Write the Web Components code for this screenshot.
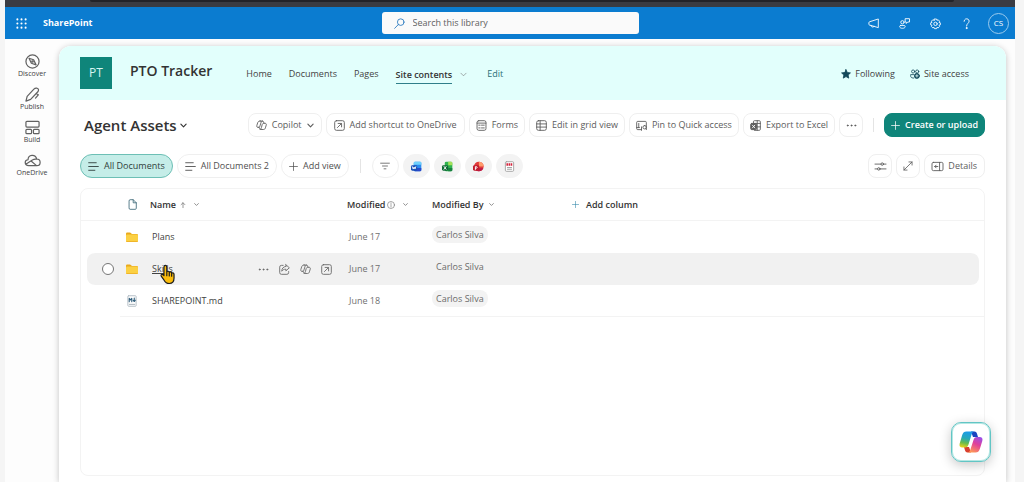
<!DOCTYPE html>
<html lang="en">
<head>
<meta charset="utf-8">
<meta name="viewport" content="width=device-width, initial-scale=1">
<title>PTO Tracker - Agent Assets</title>
<style>
  html, body { height: 100%; }
  body {
    margin: 0;
    background: #f5f5f5;
    color: #424242;
    font: 9px/12px "Open Sans", "Noto Sans", "Liberation Sans", sans-serif;
    --teal: #0f857a;
    --line: #efefef;
  }
</style>
</head>
<body>
<sp-app></sp-app>

<script>
  // Icon shapes, all on a 16x16 grid and stroked unless they say otherwise
  const ICONS = {
    waffle: [2, 8, 14].map(y => [2, 8, 14].map(x => `<circle cx="${x}" cy="${y}" r="1.5" fill="currentColor" stroke="none"/>`).join('')).join(''),
    search: '<circle cx="9.8" cy="6" r="4.8"/><path d="M6.4 9.4 1 15"/>',
    megaphone: '<path d="M15 2v12L2 10.200a1 1 0 0 1-.7-1V6.600a1 1 0 0 1 .7-1ZM4.300 10.800c0 2.600 3.600 3.400 4.500 1.200"/>',
    people: '<circle cx="5" cy="6.2" r="2.4"/><path d="M2.5 10.8h5c1 0 1.500.7 1.500 1.700 0 3.300-8 3.300-8 0 0-1 .5-1.700 1.500-1.700ZM9.500 1h5.800v4.800h-2.600L10.600 8V5.800H9.500Z"/>',
    gear: '<path d="M6.5 1.500h3l.6 1.900 1.800-.8 2 2-.8 1.800 1.900.6v3l-1.900.6.8 1.800-2 2-1.800-.8-.6 1.900h-3l-.6-1.900-1.800.8-2-2 .8-1.800L1 10V7l1.900-.6-.8-1.800 2-2 1.800.8Z"/><circle cx="8" cy="8.500" r="2.500"/>',
    help: '<path d="M4.500 4.800C4.500-.2 11.800 0 11.800 4.600c0 3-3.700 3.400-3.700 7"/><circle cx="8.100" cy="14.600" r=".8" fill="currentColor"/>',
    discover: '<circle cx="8" cy="8" r="7"/><path d="m4.300 4.500 4.900 1.600 2.600 5.500-5-1.700Z"/><circle cx="8" cy="8" r=".8"/>',
    publish: '<path d="M1 15 2.300 10 9.500 2.300c1.600-1.700 4.600-1.300 4.900.6.100.8-.1 1.500-.7 2.200L6 13.200ZM12 7l2.200 1.300-3 3.600"/>',
    build: '<rect x="1" y="1.500" width="14" height="6" rx="1"/><rect x="1" y="10" width="6" height="4.500" rx="1"/><rect x="9" y="10" width="6" height="4.500" rx="1"/>',
    onedrive: '<path d="M4 13.500C-.9 13.300-.9 7.600 3.200 7.200 3.400 1.500 11 .9 12.500 6.400c4.900.2 4.800 7.100 0 7.100ZM.8 12 8.300 7.300c1.200-.8 2.500-.9 4-.7M6.500 8.500l5.800 5"/>',
    star: '<path fill="currentColor" d="m8 1 2.100 4.600 5 .6-3.700 3.400 1 5L8 12.100l-4.400 2.500 1-5L.9 6.200l5-.6Z"/>',
    access: '<circle cx="5" cy="4" r="2.500"/><circle cx="11.500" cy="4" r="2.500"/><path d="M6 14.500C.5 14.500 1 12 1 9h5"/><circle cx="11" cy="11" r="4" fill="currentColor"/><path stroke="#e2fffc" d="M11 9v4M9 11h4"/>',
    down: '<path d="m2 5 6 6 6-6"/>',
    smallDown: '<path stroke-width="2.600" d="m2 5 6 6 6-6"/>',
    up: '<path stroke-width="2" d="M8 15V2M3 7l5-5 5 5"/>',
    plus: '<path d="M8 1v14M1 8h14"/>',
    lines: '<path d="M1 2.500h11M1 8h14M1 13.500h9"/>',
    copilot: '<path d="M6 1.500h3.500c1 0 1.300.7 1.600 1.800l.4 1.500h1.500c1.700 0 2.300 1 1.900 2.600l-1.200 4c-.5 1.600-1.200 2.400-2.700 2.400H7c-1.100 0-1.500-.7-1.800-1.800l-.4-1.300H3.200c-1.700 0-2.500-1-2-2.600l1.300-4.200C3 2.300 4 1.500 6 1.500ZM9.500 1.500C8 1.500 7.500 3 7 4.500l-1.200 4c-.4 1.500-1 2.200-2.600 2.200M11.500 4.800c-1.700 0-2.200.8-2.600 2.200l-1 4c-.4 1.500-.9 2.800-2 2.800"/>',
    shortcut: '<rect x="1" y="1" width="14" height="14" rx="2.500"/><path d="M5 11l5.500-5.500M6 5h5v5"/>',
    forms: '<rect x="1.500" y="1" width="13" height="14" rx="2.500"/><path d="M1.500 4.500h13M4 7.500h2M8 7.500h4M4 11.500h2M8 11.500h4"/>',
    grid: '<rect x="1" y="1" width="14" height="14" rx="2.500"/><path d="M1 5.700h14M1 10.300h14M6 1v14"/>',
    pin: '<path d="M8 14H2.500A1.500 1.500 0 0 1 1 12.500v-9A1.500 1.500 0 0 1 2.500 2h11A1.500 1.500 0 0 1 15 3.500V14M4 5v6M1 11h4M12.500 8a2.500 2.500 0 1 0 .1 5 2.500 2.500 0 0 0-.1-5M8 10v5"/>',
    excel: '<path d="M5 4V2.500A1.500 1.500 0 0 1 6.500 1h7A1.500 1.500 0 0 1 15 2.500v11a1.500 1.500 0 0 1-1.500 1.500h-7M10.500 1v14M5 5h10M10 10h5"/><rect x="1" y="5" width="8.500" height="9" rx="1.500" fill="currentColor"/><path stroke="#fff" d="m3.500 7.500 3.500 4M7 7.500l-3.500 4"/>',
    more: [2.5, 8, 13.5].map(x => `<circle cx="${x}" cy="8" r="1" fill="currentColor" stroke-width=".6"/>`).join(''),
    filter: '<path d="M1 3.500h14M4 8h8M6.500 12.500h3"/>',
    sliders: '<path d="M0 4.500h8.500M12.500 4.500H16M0 11.500h3.500M7.500 11.500H16"/><circle cx="10.500" cy="4.500" r="1.800"/><circle cx="5.500" cy="11.500" r="1.800"/>',
    expand: '<path d="M1.500 14.500l13-13M9.500 1.500h5v5M1.500 9.500v5h5"/>',
    details: '<rect x="0" y="2" width="16" height="12" rx="2"/><path d="M11 2v12M8.500 8H4M6 6 4 8l2 2"/>',
    file: '<path fill="#fff" d="M3 2.500A1.500 1.500 0 0 1 4.500 1H9l4.500 4.500v8A1.500 1.500 0 0 1 12 15H4.500A1.500 1.500 0 0 1 3 13.500ZM9 1v4.500h4.500"/>',
    info: '<circle cx="8" cy="8" r="7"/><path d="M8 7v5M8 4v1"/>',
    share: '<path d="M6 2H3.500A2.500 2.500 0 0 0 1 4.500v8A2.500 2.500 0 0 0 3.500 15h8a2.500 2.500 0 0 0 2.500-2.500V11M10 1l5 4.500-5 4.500V7.500c-3 0-4.500 1-6 3 .2-4 2-6.500 6-7Z"/>',
    folder: '<path fill="#e9a91c" stroke="none" d="M0 3.500A1.500 1.500 0 0 1 1.500 2h4L8 4h6.500A1.500 1.500 0 0 1 16 5.500V8H0Z"/><rect y="4.800" width="16" height="9.700" rx="1.300" fill="#fbd043" stroke="none"/><path stroke="#f0b429" d="M1 14h14"/>',
    markdown: '<rect x="2.500" y="1" width="11" height="14" rx="1" fill="#fff" stroke="#b4bec5"/><path stroke="#34617e" stroke-width="1.500" d="M4.300 9V4.500l1.700 2 1.700-2V9M11 4v4.500M9.600 7 11 8.700 12.400 7"/><path stroke="#aab4bb" d="M4.500 12.500h7"/>',
    word: '<g stroke="none"><rect x="4" y="1" width="11" height="14" rx="2" fill="#2b8df0"/><path d="M4 3a2 2 0 0 1 2-2h7a2 2 0 0 1 2 2v2.500H4Z" fill="#6fd0fb"/><path d="M4 10h11v3a2 2 0 0 1-2 2H6a2 2 0 0 1-2-2Z" fill="#2a49c8"/><rect x="0" y="6" width="9" height="8" rx="2" fill="#1750b8"/></g><path stroke="#fff" d="m2 8.300 1.200 3.400 1.300-3 1.300 3L7 8.300"/>',
    xl: '<g stroke="none"><rect x="4" y="1" width="11" height="14" rx="2" fill="#2eb34f"/><path d="M6 1h7a2 2 0 0 1 2 2v3H9V1Z" fill="#a4e05a"/><path d="M9 10h6v3a2 2 0 0 1-2 2H9Z" fill="#17803f"/><rect x="0" y="6" width="9" height="8" rx="2" fill="#0f6b36"/></g><path stroke="#fff" d="m3 8 3 4M6 8l-3 4"/>',
    powerpoint: '<g stroke="none"><circle cx="8.500" cy="8" r="7" fill="#e03a3a"/><path d="M8.500 1a7 7 0 0 1 7 7h-7Z" fill="#ff9a6b"/><path d="M2 10.500a7 7 0 0 0 13 0Z" fill="#b9184a"/><rect x="0" y="6" width="9" height="8" rx="2" fill="#c01d2e"/></g><path stroke="#fff" d="M3.500 12.300V8.200h1.300c1.800 0 1.800 2.300 0 2.300H3.500"/>',
    pdf: '<rect x="2" y="1" width="12" height="14" rx="1.500" fill="#fff" stroke="#a0a0a0"/><path stroke="#d4263e" stroke-width="3.500" stroke-dasharray="2.300 .8" stroke-linecap="butt" d="M3.500 5h9"/><path stroke="#999" d="M5 9.500h6M5 12h6"/>',
    hand: '<path fill="#fbbc0b" stroke="#1c1c1c" stroke-width="1" d="M5 9V1.800C5-.1 7.400-.1 7.400 1.800v4c.7-.9 1.900-.6 2.100.4.700-.8 1.900-.4 2 .6 1-.6 2 0 2 1.200v3c0 3-1.300 4.600-4 4.600-2.400 0-3.400-1-4.500-3L2.700 9.300c-.6-1.300.9-2.100 2.300-.3ZM7.400 6v3M9.500 6.600v2.600M11.500 7.200v2.200"/>',
  };

  function define(tag, html, setup) {
    const template = document.createElement('template');
    template.innerHTML = html;
    customElements.define(tag, class extends HTMLElement {
      connectedCallback() {
        if (this.shadowRoot) return;
        this.attachShadow({ mode: 'open' }).appendChild(template.content.cloneNode(true));
        if (setup) setup(this, this.shadowRoot);
      }
    });
  }

  define('sp-icon', `
    <style>
      :host { display: inline-flex; flex: none; width: var(--size, 11px); height: var(--size, 11px); }
      svg { width: 100%; height: 100%; overflow: visible; fill: none; stroke: currentColor;
            stroke-width: 1.3; stroke-linecap: round; stroke-linejoin: round; }
    </style>
    <svg viewBox="0 0 16 16" aria-hidden="true"></svg>`,
    (host, root) => {
      root.querySelector('svg').innerHTML = ICONS[host.getAttribute('name')];
      if (host.hasAttribute('size')) host.style.setProperty('--size', host.getAttribute('size') + 'px');
    });

  // kind: primary | wide | pill | current | file | round, none for a plain command
  define('sp-button', `
    <style>
      :host { display: inline-flex; flex: none; }
      button {
        display: flex; align-items: center; justify-content: center; gap: 5px;
        box-sizing: border-box; height: 24px; padding: 0 6px;
        border: 1px solid var(--line); border-radius: 8px;
        background: #fff; color: #5c5c5c; font: inherit; font-weight: 500; white-space: nowrap;
      }
      :host([icon-only]) button { min-width: 24px; padding: 0 5px; }
      :host([kind="wide"]) button { padding: 0 7px; }
      :host([kind="primary"]) button { background: var(--teal); border-color: var(--teal); color: #fff; font-weight: 600; }
      :host([kind="pill"]) button, :host([kind="current"]) button { border-radius: 12px; padding: 0 7px; color: #505050; }
      :host([kind="current"]) button { background: #c5ede8; border-color: #6dbfb5; color: #2f3d3b; }
      :host([kind="file"]) button { background: #f3f3f3; border-color: #f3f3f3; }
      :host([kind="file"]) button, :host([kind="round"]) button { border-radius: 12px; min-width: 27px; }
    </style>
    <button type="button"><slot name="start"></slot><slot></slot><slot name="end"></slot></button>`,
    (host, root) => {
      if (host.hasAttribute('label')) root.querySelector('button').setAttribute('aria-label', host.getAttribute('label'));
    });

  define('sp-suite-bar', `
    <style>
      :host { display: grid; grid-template-columns: 1fr 257px 1fr; align-items: center;
              height: 32px; background: #0b7cd0; color: #fff; }
      .brand, .tools { display: flex; align-items: center; }
      .brand { gap: 16px; padding-left: 11px; }
      .brand a { color: inherit; text-decoration: none; font-weight: 700; }
      button { display: flex; padding: 0; border: 0; background: none; color: inherit; font: inherit; }
      label { display: flex; align-items: center; gap: 8px; height: 22px; padding: 0 12px;
              border-radius: 3px; background: #fafafa; color: #2d7cc0; }
      input { flex: 1; min-width: 0; padding: 0; border: 0; outline: 0; background: none; font: inherit; color: #424242; }
      input::placeholder { color: #616161; opacity: 1; }
      .tools { justify-content: flex-end; gap: 20px; padding-right: 6px; }
      .tools .me { box-sizing: border-box; width: 21px; height: 21px; margin-left: -4px; align-items: center;
                   justify-content: center; border: 1px solid #9bcbee; border-radius: 50%; font-size: 8px; }
    </style>
    <div class="brand">
      <button type="button" aria-label="App launcher"><sp-icon name="waffle"></sp-icon></button>
      <a href="#">SharePoint</a>
    </div>
    <label><sp-icon name="search"></sp-icon><input type="text" placeholder="Search this library" aria-label="Search this library"></label>
    <div class="tools">
      <button type="button" aria-label="Announcements"><sp-icon name="megaphone"></sp-icon></button>
      <button type="button" aria-label="Teams"><sp-icon name="people"></sp-icon></button>
      <button type="button" aria-label="Settings"><sp-icon name="gear"></sp-icon></button>
      <button type="button" aria-label="Help"><sp-icon name="help"></sp-icon></button>
      <button type="button" class="me">CS</button>
    </div>`);

  define('sp-rail-item', `
    <style>
      :host { display: block; }
      a { display: flex; flex-direction: column; align-items: center;
          color: #424242; text-decoration: none; font-size: 7px; line-height: 9px; font-weight: 500; }
    </style>
    <a href="#"><slot name="icon"></slot><slot></slot></a>`);

  define('sp-rail', `
    <style>
      :host { display: block; flex: none; width: 54px; }
      nav { display: flex; flex-direction: column; gap: 9px; padding-top: 8px; }
      sp-icon { color: #616161; }
    </style>
    <nav aria-label="App bar">
      <sp-rail-item><sp-icon slot="icon" name="discover" size="15"></sp-icon>Discover</sp-rail-item>
      <sp-rail-item><sp-icon slot="icon" name="publish" size="15"></sp-icon>Publish</sp-rail-item>
      <sp-rail-item><sp-icon slot="icon" name="build" size="15"></sp-icon>Build</sp-rail-item>
      <sp-rail-item><sp-icon slot="icon" name="onedrive" size="15"></sp-icon>OneDrive</sp-rail-item>
    </nav>`);

  define('sp-site-header', `
    <style>
      :host { display: flex; align-items: center; height: 54px; padding: 0 37px 0 21px; background: #e2fffc; }
      .logo { display: grid; place-items: center; width: 32px; height: 32px; margin-right: 18px;
              background: var(--teal); color: #d6f5f1; font-size: 12px; }
      h1 { margin: 0 34px 4px 0; color: #333; font-size: 14px; line-height: 18px; font-weight: 600; }
      nav, .actions { display: flex; align-items: center; gap: 17px; padding-top: 2px; }
      a { color: inherit; text-decoration: none; }
      a[aria-current] { font-weight: 600; line-height: 16px; padding-top: 2px; border-bottom: 1px solid #2f7f8a; color: #333; }
      .menu { display: flex; margin: 0 3px 0 -9px; padding: 0; border: 0; background: none; color: #6a6a6a; }
      .edit { color: #2b6f77; }
      .actions { margin-left: auto; gap: 15px; }
      .actions button { display: flex; align-items: center; gap: 4px; padding: 0; border: 0; background: none; font: inherit; color: inherit; }
      .actions sp-icon { color: #12495a; }
    </style>
    <div class="logo">PT</div>
    <h1>PTO Tracker</h1>
    <nav aria-label="Site">
      <a href="#">Home</a><a href="#">Documents</a><a href="#">Pages</a>
      <a href="#" aria-current="page">Site contents</a>
      <button type="button" class="menu" aria-label="More site contents"><sp-icon name="down" size="7"></sp-icon></button>
      <a href="#" class="edit">Edit</a>
    </nav>
    <div class="actions">
      <button type="button"><sp-icon name="star" size="10"></sp-icon>Following</button>
      <button type="button"><sp-icon name="access" size="10"></sp-icon>Site access</button>
    </div>`);

  define('sp-command-bar', `
    <style>
      :host { display: flex; align-items: center; gap: 4px; padding-left: 4px; }
      h2 { display: flex; align-items: center; gap: 3px; margin: 0 auto 0 0; color: #333;
           font-size: 15px; line-height: 20px; font-weight: 600; white-space: nowrap; }
      hr { width: 1px; height: 14px; margin: 0 6px; border: 0; background: #e4e4e4; }
    </style>
    <h2>Agent Assets <sp-icon name="smallDown" size="7"></sp-icon></h2>
    <sp-button kind="wide"><sp-icon slot="start" name="copilot"></sp-icon>Copilot<sp-icon slot="end" name="smallDown" size="7"></sp-icon></sp-button>
    <sp-button kind="wide"><sp-icon slot="start" name="shortcut"></sp-icon>Add shortcut to OneDrive</sp-button>
    <sp-button><sp-icon slot="start" name="forms"></sp-icon>Forms</sp-button>
    <sp-button><sp-icon slot="start" name="grid"></sp-icon>Edit in grid view</sp-button>
    <sp-button><sp-icon slot="start" name="pin"></sp-icon>Pin to Quick access</sp-button>
    <sp-button><sp-icon slot="start" name="excel"></sp-icon>Export to Excel</sp-button>
    <sp-button icon-only label="More"><sp-icon name="more"></sp-icon></sp-button>
    <hr>
    <sp-button kind="primary"><sp-icon slot="start" name="plus" size="9"></sp-icon>Create or upload</sp-button>`);

  define('sp-view-bar', `
    <style>
      :host { display: flex; align-items: center; gap: 4px; }
      hr { width: 1px; height: 14px; margin: 0 7px; border: 0; background: #e4e4e4; }
      .gap { flex: 1; }
    </style>
    <sp-button kind="current"><sp-icon slot="start" name="lines"></sp-icon>All Documents</sp-button>
    <sp-button kind="pill"><sp-icon slot="start" name="lines"></sp-icon>All Documents 2</sp-button>
    <sp-button kind="pill"><sp-icon slot="start" name="plus" size="9"></sp-icon>Add view</sp-button>
    <hr>
    <sp-button kind="round" icon-only label="Filter"><sp-icon name="filter" size="10"></sp-icon></sp-button>
    <sp-button kind="file" icon-only label="Word"><sp-icon name="word"></sp-icon></sp-button>
    <sp-button kind="file" icon-only label="Excel"><sp-icon name="xl"></sp-icon></sp-button>
    <sp-button kind="file" icon-only label="PowerPoint"><sp-icon name="powerpoint"></sp-icon></sp-button>
    <sp-button kind="file" icon-only label="PDF"><sp-icon name="pdf"></sp-icon></sp-button>
    <span class="gap"></span>
    <sp-button icon-only label="View options"><sp-icon name="sliders"></sp-icon></sp-button>
    <sp-button icon-only label="Expand"><sp-icon name="expand" size="10"></sp-icon></sp-button>
    <sp-button kind="wide"><sp-icon slot="start" name="details"></sp-icon>Details</sp-button>`);

  const FILES = [
    { name: 'Plans', icon: 'folder', modified: 'June 17', by: 'Carlos Silva' },
    { name: 'Skills', icon: 'folder', modified: 'June 17', by: 'Carlos Silva', hover: true },
    { name: 'SHAREPOINT.md', icon: 'markdown', modified: 'June 18', by: 'Carlos Silva' },
  ];

  const fileRow = f => `
    <tr class="${f.hover ? 'hover' : ''}">
      <td class="pick">${f.hover ? `<input type="checkbox" aria-label="Select ${f.name}">` : ''}</td>
      <td class="type"><sp-icon name="${f.icon}" size="12"></sp-icon></td>
      <td class="name"><div class="cell">
        <a href="#">${f.name}</a>
        ${f.hover ? `
          <sp-icon class="cursor" name="hand" size="19"></sp-icon>
          <span class="tools">
            <button type="button" aria-label="More"><sp-icon name="more"></sp-icon></button>
            <button type="button" aria-label="Share"><sp-icon name="share"></sp-icon></button>
            <button type="button" aria-label="Copilot"><sp-icon name="copilot"></sp-icon></button>
            <button type="button" aria-label="Open"><sp-icon name="shortcut"></sp-icon></button>
          </span>` : ''}
      </div></td>
      <td class="date">${f.modified}</td>
      <td class="by"><span>${f.by}</span></td>
      <td></td>
    </tr>`;

  define('sp-file-list', `
    <style>
      :host { display: block; border: 1px solid #f3f3f3; border-radius: 8px; }
      table { width: 100%; table-layout: fixed; border-collapse: separate; border-spacing: 0; }
      th, td { box-sizing: border-box; height: 32px; padding: 0; text-align: left; vertical-align: middle; font-weight: 400; }
      th { border-bottom: 1px solid #f3f3f3; }
      th button { display: flex; align-items: center; gap: 5px; padding: 0; border: 0; background: none;
                  color: #333; font: inherit; font-weight: 600; }
      th.name { padding-left: 6px; }
      th.name button { gap: 4px; }
      th.name sp-icon:last-child { margin-left: 4px; }
      th.date, th.by { padding-left: 2px; }
      th.date span { display: flex; align-items: center; gap: 2px; }
      th.date button { gap: 8px; }
      th sp-icon { color: #777; }
      th.add sp-icon { color: #2f87a8; margin-right: 2px; }
      th.add { padding-left: 2px; }
      .type { text-align: center; line-height: 0; }
      .type sp-icon { vertical-align: middle; }
      th.type sp-icon { color: #47707f; }
      td.name { padding-left: 8px; }
      td.date { padding-left: 4px; color: #707070; }
      td.by { padding: 0 0 4px 2px; }
      td.by span { padding: 2px 4px; border-radius: 8px; background: #f3f3f3; color: #6b6b6b; }
      .cell { display: flex; align-items: center; justify-content: space-between; position: relative; }
      .cell a { color: inherit; text-decoration: none; }
      .hover td { background: #f1f1f1; }
      .hover td.by span { background: none; }
      .cell a:hover, .hover a { text-decoration: underline; }
      .hover td:first-child { border-left: 6px solid transparent; background-clip: padding-box; border-radius: 14px 0 0 14px / 8px 0 0 8px; }
      .hover td:last-child { border-right: 5px solid transparent; background-clip: padding-box; border-radius: 0 13px 13px 0 / 0 8px 8px 0; }
      tbody tr:last-child td:not(.pick) { border-bottom: 1px solid #f3f3f3; }
      .pick { text-align: right; line-height: 0; }
      input { appearance: none; box-sizing: border-box; width: 12px; height: 12px; margin: 0 6px 0 0;
              border: 1px solid #767676; border-radius: 50%; background: #fff; }
      .tools { display: flex; gap: 10px; padding-right: 13px; }
      .tools button { display: flex; padding: 0; border: 0; background: none; color: #6a6a6a; }
      .cursor { position: absolute; left: 6px; top: 2px; }
    </style>
    <table>
      <colgroup><col style="width:39px"><col style="width:24px"><col style="width:201px"><col style="width:85px"><col style="width:140px"><col></colgroup>
      <thead><tr>
        <th></th>
        <th class="type"><sp-icon name="file"></sp-icon></th>
        <th class="name"><button type="button">Name <sp-icon name="up" size="6"></sp-icon> <sp-icon name="smallDown" size="5"></sp-icon></button></th>
        <th class="date"><button type="button"><span>Modified <sp-icon name="info" size="8"></sp-icon></span><sp-icon name="smallDown" size="5"></sp-icon></button></th>
        <th class="by"><button type="button">Modified By <sp-icon name="smallDown" size="5"></sp-icon></button></th>
        <th class="add"><button type="button"><sp-icon name="plus" size="7"></sp-icon>Add column</button></th>
      </tr></thead>
      <tbody>${FILES.map(fileRow).join('')}</tbody>
    </table>`);

  define('sp-copilot-button', `
    <style>
      :host { display: block; }
      button { display: grid; place-items: center; width: 40px; height: 40px; padding: 0; box-sizing: border-box;
               border: 1px solid #62c5c5; border-radius: 10px; background: #fff;
               box-shadow: 0 0 0 1px #b5e8e3 inset, 0 3px 12px rgba(0, 0, 0, .22); }
      svg { width: 24px; height: 22px; }
    </style>
    <button type="button" aria-label="Copilot">
      <svg viewBox="0 0 24 22" aria-hidden="true">
        <defs>
          <linearGradient id="a" x1=".4" y1="0" x2=".2" y2="1"><stop offset="0" stop-color="#1b9be8"/><stop offset=".4" stop-color="#25a9b8"/><stop offset=".7" stop-color="#68bb4c"/><stop offset="1" stop-color="#f3d417"/></linearGradient>
          <linearGradient id="b" x1=".8" y1="0" x2=".3" y2="1"><stop offset="0" stop-color="#9a50e8"/><stop offset=".45" stop-color="#e0409a"/><stop offset="1" stop-color="#ff9a55"/></linearGradient>
        </defs>
        <path fill="#1a45c0" d="M12 .5h3.500c1.500 0 2.200 1 2.600 2.500l.9 3h-5Z"/>
        <path fill="#d9402f" d="M12 21.500H8.500C7 21.500 6.300 20.500 5.900 19L5 16h5Z"/>
        <path fill="url(#a)" d="M7.500.5h8c-1.800 0-2.500 1.500-3 3.200l-3 9.800c-.6 2-1.500 3-3.500 3H3.500C1 16.500 0 15 .7 12.500L3.200 4C4 1.500 5.200.5 7.500.5Z"/>
        <path fill="url(#b)" d="M16.500 21.500h-8c1.800 0 2.500-1.500 3-3.200l3-9.300c.6-2 1.500-3 3.500-3h2.500c2.500 0 3.500 1.500 2.800 4L20.800 18c-.8 2.500-2 3.500-4.300 3.500Z"/>
      </svg>
    </button>`);

  define('sp-app', `
    <style>
      :host { display: flex; flex-direction: column; box-sizing: border-box; min-height: 100vh; padding: 0 9px 0 5px; }
      .browser { height: 7px; background: #3a3b42; }
      .browser div { height: 2px; margin: 0 61px 0 85px; background: #222329; border-radius: 0 0 4px 4px; }
      .body { display: flex; flex: 1; padding: 7px 9px 0 0; background: #fdfdfd; overflow: hidden; }
      main { display: flex; flex: 1; flex-direction: column; min-width: 0; overflow: hidden;
             border-radius: 12px 12px 0 0; background: #fff; }
      .shell { display: flex; flex: 1; min-width: 0; border-radius: 12px 12px 0 0; box-shadow: 0 1px 6px rgba(0, 0, 0, .24); }
      .content { display: flex; flex: 1; flex-direction: column; padding: 13px 21px 6px; }
      sp-view-bar { margin: 17px 0 10px; }
      sp-file-list { flex: 1; }
      sp-copilot-button { position: fixed; right: 33px; bottom: 20px; }
    </style>
    <div class="browser"><div></div></div>
    <sp-suite-bar></sp-suite-bar>
    <div class="body">
      <sp-rail></sp-rail>
      <div class="shell">
        <main>
          <sp-site-header></sp-site-header>
          <div class="content">
            <sp-command-bar></sp-command-bar>
            <sp-view-bar></sp-view-bar>
            <sp-file-list></sp-file-list>
          </div>
        </main>
      </div>
    </div>
    <sp-copilot-button></sp-copilot-button>`);
</script>
</body>
</html>
